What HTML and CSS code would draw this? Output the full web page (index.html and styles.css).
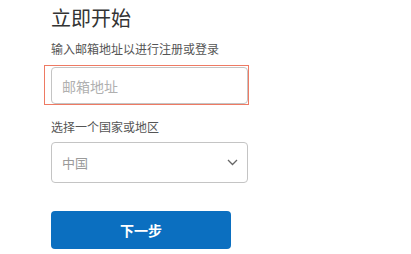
FILE: index.html
```html
<!DOCTYPE html>
<html lang="zh-CN">
<head>
<meta charset="utf-8">
<title>立即开始</title>
<link rel="stylesheet" href="styles.css">
</head>
<body>
<main class="form">
  <h1 class="title">立即开始</h1>
  <p class="hint">输入邮箱地址以进行注册或登录</p>
  <div class="field-wrap">
    <input class="email" type="text" placeholder="邮箱地址">
    <div class="highlight"></div>
  </div>
  <p class="label">选择一个国家或地区</p>
  <div class="select">
    <span class="select-value">中国</span>
    <svg class="chevron" width="11" height="7" viewBox="0 0 11 7"><path d="M1 1 L5.5 5.5 L10 1" fill="none" stroke="#666" stroke-width="1.3"/></svg>
  </div>
  <button class="next" type="button">下一步</button>
</main>
</body>
</html>
```
FILE: styles.css
```css
html, body {
  margin: 0;
  padding: 0;
  background: #fff;
}
body {
  font-family: "Noto Sans CJK SC", "Noto Sans", sans-serif;
}
.form {
  display: flex;
  flex-direction: column;
  align-items: flex-start;
  padding: 5px 0 0 51px;
  width: 197px;
}
.title {
  margin: 0;
  font-size: 20px;
  line-height: 26px;
  font-weight: 400;
  color: #333;
}
.hint {
  margin: 10px 0 0;
  font-size: 12px;
  line-height: 16px;
  color: #555;
}
.field-wrap {
  position: relative;
  margin-top: 10px;
  width: 197px;
}
.email {
  box-sizing: border-box;
  width: 197px;
  height: 37px;
  margin: 0;
  padding: 0 10px;
  border: 1px solid #c4c4c4;
  border-radius: 4px;
  font-family: inherit;
  font-size: 14px;
  color: #333;
  outline: none;
  display: block;
}
.email::placeholder {
  color: #b0b0b0;
}
.highlight {
  position: absolute;
  left: -7px;
  top: -2px;
  width: 205px;
  height: 40px;
  box-sizing: border-box;
  border: 1px solid #ee7a63;
  pointer-events: none;
}
.label {
  margin: 15px 0 0;
  font-size: 12px;
  line-height: 16px;
  color: #555;
}
.select {
  box-sizing: border-box;
  margin-top: 7px;
  width: 197px;
  height: 41px;
  border: 1px solid #c4c4c4;
  border-radius: 4px;
  display: flex;
  align-items: center;
  justify-content: space-between;
  padding: 0 9px 0 10px;
}
.select-value {
  font-size: 13px;
  color: #9a9a9a;
}
.chevron {
  display: block;
}
.next {
  margin-top: 28px;
  width: 180px;
  height: 38px;
  border: none;
  border-radius: 4px;
  background: #0b6fc0;
  color: #fff;
  font-family: inherit;
  font-size: 14px;
  font-weight: 700;
  padding: 0;
}
```
